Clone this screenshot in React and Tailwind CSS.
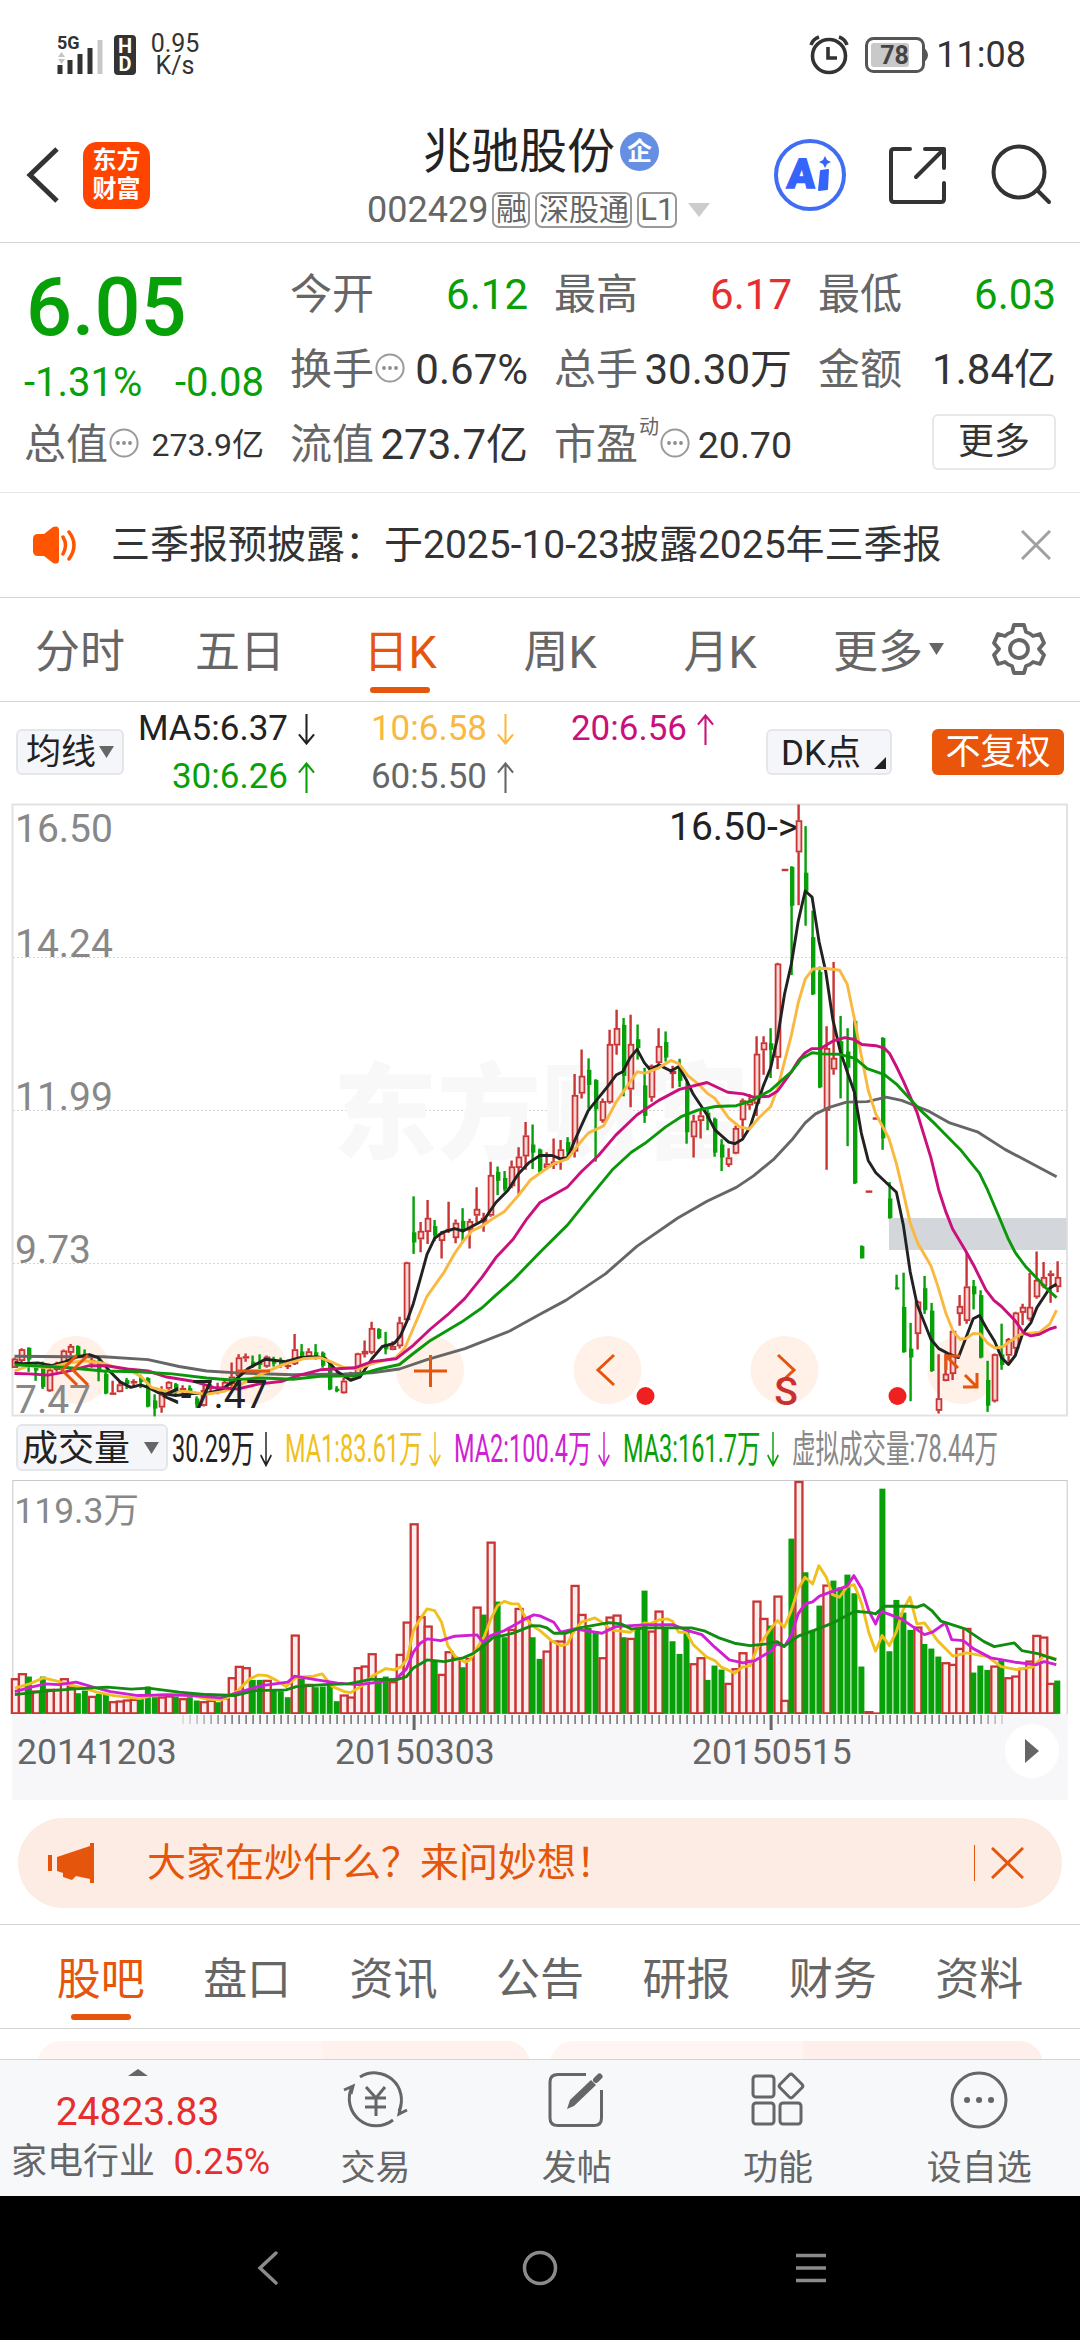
import React, { useState } from "react";

// One entry per trading day: [up/down, high, body top, body bottom, low]
const candles = [
  ["r", 1390, 1393, 1415, 1415], ["r", 1367, 1370, 1398, 1410], ["g", 1365, 1366, 1395, 1425], ["g", 1405, 1415, 1422, 1447],
  ["g", 1400, 1405, 1462, 1467], ["r", 1405, 1420, 1472, 1474], ["r", 1400, 1408, 1420, 1425], ["r", 1370, 1373, 1405, 1412],
  ["r", 1357, 1362, 1378, 1385], ["g", 1360, 1362, 1385, 1390], ["g", 1370, 1380, 1388, 1395], ["r", 1385, 1396, 1404, 1415],
  ["g", 1385, 1402, 1420, 1448], ["g", 1420, 1430, 1478, 1480], ["r", 1447, 1476, 1479, 1480], ["r", 1450, 1456, 1474, 1475],
  ["g", 1440, 1445, 1455, 1467], ["r", 1443, 1448, 1453, 1460], ["g", 1432, 1440, 1450, 1465], ["g", 1438, 1440, 1510, 1512],
  ["g", 1480, 1495, 1515, 1534], ["r", 1460, 1480, 1512, 1525], ["r", 1448, 1450, 1466, 1480], ["g", 1452, 1455, 1475, 1485],
  ["r", 1458, 1465, 1470, 1482], ["g", 1458, 1465, 1480, 1485], ["g", 1485, 1490, 1505, 1513], ["r", 1458, 1470, 1508, 1510],
  ["r", 1455, 1462, 1466, 1480], ["r", 1452, 1463, 1467, 1480], ["r", 1440, 1450, 1465, 1470], ["r", 1402, 1437, 1455, 1465],
  ["r", 1382, 1390, 1435, 1440], ["r", 1380, 1387, 1392, 1400], ["g", 1385, 1400, 1410, 1415], ["g", 1382, 1400, 1408, 1418],
  ["r", 1385, 1388, 1412, 1415], ["g", 1388, 1395, 1405, 1412], ["g", 1390, 1398, 1408, 1415], ["r", 1395, 1408, 1412, 1418],
  ["r", 1332, 1370, 1406, 1408], ["g", 1357, 1375, 1388, 1395], ["r", 1367, 1375, 1388, 1392], ["g", 1357, 1377, 1385, 1395],
  ["g", 1375, 1378, 1410, 1415], ["g", 1400, 1405, 1468, 1470], ["g", 1460, 1466, 1472, 1475], ["r", 1440, 1447, 1477, 1478],
  ["r", 1425, 1432, 1444, 1448], ["r", 1378, 1380, 1438, 1440], ["r", 1348, 1374, 1382, 1390], ["r", 1302, 1318, 1378, 1382],
  ["g", 1318, 1320, 1342, 1345], ["g", 1327, 1358, 1370, 1382], ["r", 1350, 1362, 1371, 1372], ["r", 1290, 1304, 1362, 1368],
  ["r", 1155, 1157, 1298, 1300], ["g", 995, 1083, 1108, 1136], ["r", 1058, 1080, 1100, 1132], ["r", 1004, 1048, 1082, 1112],
  ["g", 1053, 1068, 1090, 1105], ["r", 1080, 1085, 1104, 1147], ["r", 1008, 1075, 1080, 1085], ["r", 1052, 1060, 1097, 1110],
  ["g", 1024, 1055, 1080, 1105], ["r", 1050, 1056, 1078, 1123], ["r", 973, 1026, 1042, 1060], ["r", 1035, 1048, 1058, 1082],
  ["r", 910, 943, 1042, 1045], ["g", 922, 935, 957, 992], ["g", 933, 950, 978, 983], ["r", 907, 922, 970, 975],
  ["r", 875, 898, 925, 990], ["r", 813, 846, 897, 930], ["g", 819, 868, 888, 928], ["g", 878, 880, 935, 940],
  ["r", 887, 915, 925, 930], ["r", 853, 910, 918, 928], ["r", 857, 880, 905, 930], ["g", 850, 862, 885, 905],
  ["r", 695, 747, 885, 900], ["r", 635, 700, 743, 755], ["g", 657, 685, 722, 780], ["g", 708, 710, 782, 910],
  ["r", 755, 762, 810, 815], ["r", 587, 622, 765, 768], ["r", 538, 583, 625, 648], ["g", 558, 575, 700, 750],
  ["r", 550, 622, 733, 777], ["g", 574, 610, 632, 660], ["g", 680, 723, 798, 815], ["r", 672, 675, 753, 763],
  ["r", 583, 627, 668, 672], ["g", 591, 617, 655, 665], ["r", 675, 688, 695, 730], ["g", 658, 680, 712, 727],
  ["g", 715, 730, 838, 866], ["r", 795, 810, 850, 900], ["r", 785, 797, 810, 853], ["g", 782, 790, 805, 833],
  ["g", 802, 805, 888, 898], ["g", 855, 868, 900, 933], ["r", 877, 900, 918, 923], ["r", 822, 828, 890, 892],
  ["r", 755, 760, 808, 850], ["r", 745, 762, 772, 783], ["r", 603, 646, 768, 798], ["r", 603, 618, 637, 697],
  ["g", 583, 620, 636, 705], ["r", 423, 425, 655, 683], ["r", 193, 193, 197, 197], ["g", 186, 188, 283, 453],
  ["r", 35, 74, 152, 282], ["g", 88, 202, 248, 332], ["g", 295, 360, 500, 502], ["g", 432, 445, 728, 730],
  ["r", 578, 632, 785, 930], ["r", 421, 656, 684, 697], ["g", 553, 615, 650, 755], ["g", 583, 640, 680, 872],
  ["g", 563, 565, 963, 965], ["g", 1115, 1117, 1147, 1147], ["r", 981, 981, 985, 985], ["r", 802, 802, 806, 806],
  ["g", 605, 607, 853, 881], ["g", 960, 1000, 1048, 1050], ["g", 1187, 1218, 1223, 1223], ["g", 1182, 1266, 1377, 1378],
  ["g", 1305, 1368, 1390, 1497], ["r", 1250, 1253, 1332, 1370], ["g", 1190, 1220, 1274, 1283], ["g", 1256, 1275, 1423, 1425],
  ["r", 1382, 1490, 1520, 1527], ["r", 1380, 1430, 1447, 1448], ["r", 1322, 1325, 1430, 1445], ["r", 1237, 1264, 1283, 1312],
  ["r", 1130, 1216, 1300, 1307], ["g", 1200, 1215, 1235, 1272], ["g", 1225, 1237, 1390, 1392], ["g", 1398, 1445, 1508, 1523],
  ["r", 1380, 1382, 1497, 1500], ["g", 1307, 1382, 1408, 1420], ["r", 1342, 1345, 1385, 1400], ["r", 1278, 1280, 1368, 1385],
  ["r", 1258, 1266, 1280, 1310], ["r", 1183, 1266, 1296, 1300], ["r", 1130, 1200, 1242, 1246], ["r", 1156, 1193, 1215, 1220],
  ["r", 1177, 1184, 1190, 1256], ["r", 1154, 1193, 1217, 1230],
];

const volumes =
  "r803 r788 g798 r840 g798 r835 r835 r803 r828 g848 g840 r856 g850 g852 r872 r870 r867 r865 g865 g828 g860 r858 r855 g858 r863 g860 g870 r872 r868 g875 r862 r800 r766 r770 g808 g808 r808 g838 g842 g860 r672 g803 r820 g830 g828 g818 g872 r852 r858 r770 r765 r728 g815 g798 r812 r730 r633 r338 r617 r645 g750 r790 r722 r740 g770 r742 r588 g612 r393 g573 g680 r655 r592 r620 g680 g745 r720 r690 r690 r660 r523 r610 g652 g662 r740 r618 r612 g680 r682 g650 g540 r660 r600 g650 g692 g730 g650 r758 r740 g808 g765 g777 r817 r773 r725 r748 r570 r622 g645 r555 r868 g384 r211 g485 g660 g585 r522 g510 g530 g492 g548 g768 r902 r906 g234 g722 g568 g606 g658 r648 g700 g714 g738 r755 r760 r712 r652 g786 g765 g778 r765 g745 r800 r795 r772 r750 r673 r678 r817 g810".split(" ");

// Each average is stored as two halves of x,y pairs, the second half starts at x = 1568
const priceLines = [
  {
    color: "#666666",
    a: "42,1387 200,1388 300,1388 430,1395 520,1412 600,1423 700,1428 850,1432 1000,1430 1080,1427 1160,1418 1240,1395 1350,1368 1480,1325 1568,1284",
    b: "75,1250 190,1185 282,1117 400,1048 485,1007 570,973 620,945 680,903 735,853 770,815 800,793 840,777 890,764 950,763 1005,752 1050,760 1095,775 1130,787 1190,815 1270,837 1350,880 1440,920 1500,947",
  },
  {
    color: "#222222",
    a: "42,1402 65,1405 110,1403 150,1410 190,1400 225,1388 260,1383 285,1390 320,1425 350,1450 380,1463 408,1457 430,1463 460,1476 510,1483 560,1478 600,1477 640,1470 680,1447 720,1417 770,1394 830,1400 870,1390 920,1388 945,1392 980,1425 1018,1446 1045,1438 1080,1393 1110,1363 1145,1355 1162,1338 1182,1300 1200,1258 1220,1198 1240,1137 1262,1098 1285,1083 1320,1074 1345,1080 1385,1062 1405,1053 1440,1010 1475,980 1505,940 1535,913 1568,895",
    b: "35,895 60,903 80,900 100,860 140,785 200,722 222,697 240,690 262,655 282,635 303,668 320,685 345,673 380,688 403,677 425,710 445,745 485,795 508,832 548,862 566,866 588,855 610,825 648,725 670,680 690,605 710,500 730,425 750,320 770,247 790,262 810,370 830,445 850,560 872,640 892,690 913,740 933,840 953,907 975,937 1035,985 1055,1065 1075,1180 1095,1260 1135,1345 1158,1368 1185,1380 1215,1390 1240,1335 1258,1295 1276,1287 1298,1320 1320,1350 1340,1390 1360,1407 1380,1385 1402,1330 1425,1305 1443,1267 1480,1220 1500,1210",
  },
  {
    color: "#f9b940",
    a: "42,1423 85,1410 140,1415 190,1405 240,1398 290,1402 340,1415 385,1425 410,1437 440,1463 480,1472 540,1473 600,1480 650,1473 700,1455 760,1430 820,1408 880,1393 930,1390 960,1400 1000,1415 1040,1418 1080,1405 1150,1390 1175,1367 1200,1318 1240,1240 1290,1180 1320,1135 1345,1105 1370,1080 1400,1068 1430,1050 1465,1032 1505,993 1540,955 1568,938",
    b: "40,915 80,903 110,870 140,840 185,822 220,765 282,690 305,693 345,680 380,662 403,670 430,700 460,720 485,742 508,755 548,803 580,825 608,830 635,803 670,775 690,730 730,600 750,520 770,463 792,438 825,436 870,441 892,475 913,560 933,650 953,735 975,793 1013,853 1035,915 1055,985 1075,1060 1097,1110 1135,1165 1155,1215 1178,1280 1200,1327 1220,1345 1238,1343 1258,1331 1278,1332 1300,1355 1322,1367 1345,1363 1365,1350 1395,1333 1450,1328 1480,1308 1500,1274",
  },
  {
    color: "#c9107c",
    a: "42,1429 85,1430 140,1433 190,1425 260,1410 310,1410 370,1418 430,1423 480,1437 560,1448 620,1463 690,1467 750,1455 820,1448 870,1433 930,1420 1030,1415 1080,1400 1150,1393 1200,1360 1250,1320 1300,1285 1350,1245 1400,1193 1440,1145 1490,1100 1530,1050 1568,1010",
    b: "80,972 120,935 170,895 220,845 282,795 345,760 405,733 485,716 545,740 590,744 620,752 665,750 690,737 730,690 750,663 770,643 790,633 815,633 850,615 885,606 910,610 935,623 975,626 1000,632 1015,645 1035,677 1055,712 1095,790 1135,900 1158,980 1178,1032 1198,1075 1235,1127 1260,1165 1295,1225 1318,1250 1340,1265 1380,1300 1405,1330 1425,1337 1450,1333 1480,1320 1500,1315",
  },
  {
    color: "#0a970a",
    a: "42,1408 100,1410 200,1415 300,1423 400,1425 500,1430 600,1440 670,1445 760,1440 850,1443 930,1436 1030,1435 1100,1418 1160,1407 1200,1380 1250,1348 1340,1303 1400,1268 1440,1237 1490,1200 1568,1132",
    b: "80,1065 140,1002 210,930 265,887 305,865 365,825 410,800 460,783 510,775 570,773 610,762 670,735 700,712 730,690 760,657 790,643 820,646 870,647 915,657 950,682 1000,697 1035,720 1100,780 1150,820 1220,880 1276,938 1300,980 1335,1050 1360,1100 1380,1133 1410,1167 1440,1193 1470,1220 1500,1243",
  },
];

const volumeLines = [
  {
    color: "#f0c01e",
    a: "42,833 85,820 125,802 165,812 200,822 240,832 280,845 330,855 405,864 440,855 500,850 560,855 600,866 640,869 660,862 690,840 725,805 750,793 775,795 800,808 830,828 860,800 910,797 935,790 965,828 1000,843 1018,846 1060,820 1080,797 1120,774 1145,778 1165,768 1182,745 1200,660 1220,625 1240,595 1262,600 1282,635 1300,705 1322,738 1350,755 1365,748 1385,712 1405,680 1425,625 1445,585 1465,572 1485,580 1505,580 1525,620 1545,645 1568,660",
    b: "35,692 62,705 80,700 97,665 120,635 160,622 180,635 205,658 262,665 303,637 320,640 345,628 370,625 385,632 403,665 425,665 445,702 485,740 508,750 527,770 566,788 588,770 610,765 630,715 670,655 690,630 710,650 730,600 750,535 770,500 792,520 810,465 832,500 850,552 870,560 892,528 913,522 935,580 955,665 975,722 994,675 1015,705 1035,665 1055,598 1075,560 1095,640 1117,637 1155,690 1200,737 1240,727 1300,738 1340,768 1385,777 1430,770 1465,735 1500,745",
  },
  {
    color: "#d01fd4",
    a: "42,843 90,830 130,820 170,822 220,815 270,830 320,843 400,855 480,853 560,855 640,862 700,843 760,825 835,815 855,797 920,808 980,818 1040,822 1100,815 1150,805 1180,775 1200,725 1220,698 1240,685 1280,690 1320,677 1385,673 1402,695 1425,675 1465,660 1525,625 1550,613 1568,616",
    b: "40,635 60,665 100,655 180,668 220,648 300,643 385,642 430,660 470,672 508,710 550,748 590,757 625,750 670,722 688,700 710,708 730,675 750,610 770,580 792,574 812,557 892,527 912,495 935,535 955,600 975,640 990,602 1050,625 1117,672 1140,665 1178,637 1196,687 1230,690 1260,715 1310,742 1380,755 1440,763 1465,753 1500,762",
  },
  {
    color: "#118c11",
    a: "42,852 130,842 220,835 310,830 380,836 430,833 520,845 600,852 680,855 740,840 830,838 860,828 940,822 1010,820 1080,806 1150,808 1180,798 1200,772 1240,748 1290,753 1345,742 1375,728 1405,705 1430,682 1490,668 1545,645 1568,646",
    b: "20,652 40,668 75,668 115,652 200,636 235,640 265,655 320,652 440,652 480,662 520,682 565,698 610,705 660,700 688,693 710,707 750,677 800,658 850,638 915,602 960,606 975,610 1000,587 1075,587 1095,590 1115,582 1140,602 1165,632 1235,655 1290,693 1320,708 1378,697 1400,720 1450,730 1500,748",
  },
];

const RED = "#c93434";
const GREEN = "#08a008";

const dayX = (i) => 14.6 + 7 * i;
const priceY = (v) => (v - 35) / 2.45 + 1.5;
const volumeY = (v) => (v - 211) / 3 + 1;

const toPoints = (line, scaleY) => {
  const parse = (text, shift) =>
    text.split(" ").map((pair) => {
      const [x, y] = pair.split(",").map(Number);
      return `${((x + shift) / 2.9037).toFixed(1)},${scaleY(y).toFixed(1)}`;
    });
  return [...parse(line.a, 0), ...parse(line.b, 1568)].join(" ");
};

function Arrow({ up, className }) {
  return (
    <svg className={className} viewBox="0 0 18 32" fill="none" stroke="currentColor" strokeWidth="2.2" preserveAspectRatio="none">
      {up ? <path d="M9 32V1M1 11L9 1.5L17 11" /> : <path d="M9 0V31M1 21L9 30.5L17 21" />}
    </svg>
  );
}

function Triangle({ className }) {
  return (
    <svg className={className} viewBox="0 0 10 10" preserveAspectRatio="none" fill="currentColor">
      <path d="M0 0H10L5 10Z" />
    </svg>
  );
}

function InfoDots() {
  return (
    <svg className="h-[30px] w-[30px] shrink-0" viewBox="0 0 30 30">
      <circle cx="15" cy="15" r="13.6" fill="none" stroke="#9a9a9a" strokeWidth="2" />
      <circle cx="9" cy="15" r="1.9" fill="#8c8c8c" />
      <circle cx="15" cy="15" r="1.9" fill="#8c8c8c" />
      <circle cx="21" cy="15" r="1.9" fill="#8c8c8c" />
    </svg>
  );
}

function StatusBar() {
  return (
    <div className="flex h-[110px] items-center pl-[57px] pr-[54px] text-[#333333]">
      <svg className="h-[42px] w-[47px] overflow-visible" viewBox="0 0 47 42">
        <text x="0" y="15" fontSize="18" fontWeight="700" fill="#333">5G</text>
        <path d="M4.500 18L8 23H1ZM4.500 30L8 25H1Z" fill="#c4c4c4" />
        <path d="M3 31V40M13 26V40M23 20V40M33 14V40" stroke="#333" strokeWidth="5" />
        <path d="M43 6V40" stroke="#c8c8c8" strokeWidth="5" />
      </svg>
      <div className="ml-[10px] flex h-[40px] w-[22px] flex-col items-center justify-center rounded-[4px] bg-[#333333] text-[20px] font-bold leading-[18px] text-white">
        <span>H</span>
        <span>D</span>
      </div>
      <div className="ml-[14px] flex w-[50px] flex-col items-center text-[25px] leading-[22px]">
        <span>0.95</span>
        <span>K/s</span>
      </div>
      <div className="ml-auto flex items-center">
        <svg className="h-[40px] w-[40px]" viewBox="0 0 40 40" fill="none" stroke="#333" strokeWidth="3.600">
          <circle cx="20" cy="21" r="16.500" />
          <path d="M19 12V23H28" />
          <path d="M2 10Q4 4 10 2M38 10Q36 4 30 2" />
        </svg>
        <svg className="ml-[16px] h-[36px] w-[64px]" viewBox="0 0 64 36">
          <rect x="1.500" y="1.500" width="57" height="33" rx="7" fill="#fff" stroke="#555" strokeWidth="3" />
          <rect x="6" y="6" width="38" height="24" rx="3" fill="#c9c9c9" />
          <path d="M60 13Q64 18 60 23Z" fill="#555" stroke="#555" strokeWidth="2" />
          <text x="29.500" y="26.500" textAnchor="middle" fontSize="25" fontWeight="700" fill="#444">78</text>
        </svg>
        <span className="ml-[7px] text-[36px] leading-none">11:08</span>
      </div>
    </div>
  );
}

function Header() {
  return (
    <div className="flex h-[133px] items-start border-b border-[#d4d4d4] pl-[26px]">
      <svg className="mt-[36px] h-[58px] w-[34px]" viewBox="0 0 34 58" fill="none" stroke="#333" strokeWidth="5">
        <path d="M31 3L4 29L31 55" />
      </svg>
      <div className="ml-[23px] mt-[32px] flex h-[67px] w-[67px] flex-col items-center justify-center rounded-[14px] bg-[#ff4400] text-[24px] font-bold leading-[29px] text-white">
        <span>东方</span>
        <span>财富</span>
      </div>
      <div className="ml-[217px] mt-[12px] flex w-[344px] flex-col">
        <div className="ml-[56px] flex h-[60px] items-center">
          <span className="text-[48px] leading-[60px] text-[#222222]">兆驰股份</span>
          <span className="ml-[5px] flex h-[39px] w-[39px] items-center justify-center rounded-full bg-[#658fe3] text-[25px] font-bold leading-none text-white">企</span>
        </div>
        <div className="mt-[10px] flex h-[36px] items-center whitespace-nowrap text-[#666666]">
          <span className="text-[36px] leading-[36px]">002429</span>
          <span className="ml-[4px] flex h-[36px] w-[38px] items-center justify-center rounded-[7px] border-2 border-[#999999] text-[31px] leading-[32px]">融</span>
          <span className="ml-[5px] flex h-[36px] w-[97px] items-center justify-center rounded-[7px] border-2 border-[#999999] text-[30px] leading-[32px]">深股通</span>
          <span className="ml-[5px] flex h-[36px] w-[40px] items-center justify-center rounded-[7px] border-2 border-[#999999] text-[31px] leading-[32px]">L1</span>
          <Triangle className="ml-[11px] h-[14px] w-[22px] text-[#cccccc]" />
        </div>
      </div>
      <svg className="ml-[62px] mt-[28px] h-[74px] w-[74px]" viewBox="0 0 74 74">
        <circle cx="37" cy="37" r="34" fill="none" stroke="#416df5" strokeWidth="4" />
        <text x="14" y="50" fontSize="41" fontWeight="900" fill="#3564fb" stroke="#3564fb" strokeWidth="1.500" transform="skewX(-4) translate(3 0)">A</text>
        <path d="M48 33L55 32L54 51L46 52Z" fill="#3564fb" stroke="#3564fb" strokeWidth="2" strokeLinejoin="round" />
        <path d="M52 18L54 22L58 24L54 26L52 30L50 26L46 24L50 22Z" fill="#3564fb" />
      </svg>
      <svg className="ml-[39px] mt-[33px] h-[62px] w-[62px]" viewBox="0 0 62 62" fill="none" stroke="#333" strokeWidth="4" strokeLinecap="round" strokeLinejoin="round">
        <path d="M24 6H8Q5 6 5 9V56Q5 59 8 59H55Q58 59 58 56V40" />
        <path d="M39 6H58V25M58 6L30 34" />
      </svg>
      <svg className="ml-[41px] mt-[32px] h-[64px] w-[64px]" viewBox="0 0 64 64" fill="none" stroke="#333" strokeWidth="4" strokeLinecap="round">
        <circle cx="30" cy="30" r="25.500" />
        <path d="M48 48L60 60" />
      </svg>
    </div>
  );
}

function Stat({ label, value, info, sup, color = "text-[#333333]", size = "text-[42px]" }) {
  return (
    <div className="flex h-[75px] items-center justify-between leading-none">
      <span className="flex items-center whitespace-nowrap text-[42px] text-[#666666]">
        {label}
        {sup && <span className="-mt-[36px] ml-[1px] text-[20px]">{sup}</span>}
        {info && <span className="-mt-[4px] ml-[1px]"><InfoDots /></span>}
      </span>
      <span className={`${color} ${size} whitespace-nowrap`}>{value}</span>
    </div>
  );
}

function Quote() {
  return (
    <div className="grid h-[250px] grid-cols-[240px_238px_238px_238px] gap-x-[26px] border-b border-[#e6e6e6] pl-[24px] pt-[15px]">
      <div className="flex flex-col leading-none text-[#08a008]">
        <div className="flex h-[100px] items-center pl-[2px] text-[81px] font-medium">6.05</div>
        <div className="flex h-[50px] items-center justify-between text-[40px]">
          <span>-1.31%</span>
          <span>-0.08</span>
        </div>
        <Stat label="总值" value="273.9亿" info size="text-[32px]" />
      </div>
      <div>
        <Stat label="今开" value="6.12" color="text-[#08a008]" />
        <Stat label="换手" value="0.67%" info />
        <Stat label="流值" value="273.7亿" />
      </div>
      <div>
        <Stat label="最高" value="6.17" color="text-[#e62e2e]" />
        <Stat label="总手" value="30.30万" />
        <Stat label="市盈" value="20.70" info sup="动" size="text-[37.500px]" />
      </div>
      <div>
        <Stat label="最低" value="6.03" color="text-[#08a008]" />
        <Stat label="金额" value="1.84亿" />
        <div className="flex h-[75px] items-center justify-end">
          <button className="h-[56px] w-[124px] -translate-y-[3px] rounded-[6px] border-2 border-[#e8e8e8] text-[36px] leading-none text-[#333333]">更多</button>
        </div>
      </div>
    </div>
  );
}

function Notice() {
  return (
    <div className="flex h-[105px] items-center border-b border-[#d4d4d4] pl-[33px] pr-[29px]">
      <svg className="h-[38px] w-[46px]" viewBox="0 0 46 38">
        <path d="M0 13Q0 8 5 8H11L20 1Q26 -1 26 4V34Q26 39 20 37L11 30H5Q0 30 0 25Z" fill="#ff5500" />
        <path d="M30 11Q35 19 30 28M36 6Q46 19 36 33" fill="none" stroke="#ff5500" strokeWidth="3.500" strokeLinecap="round" />
      </svg>
      <span className="ml-[32px] mt-[2px] whitespace-nowrap text-[39px] leading-none text-[#333333]">三季报预披露：于2025-10-23披露2025年三季报</span>
      <svg className="ml-auto h-[30px] w-[30px]" viewBox="0 0 30 30" stroke="#a0a0a0" strokeWidth="3">
        <path d="M1 1L29 29M29 1L1 29" />
      </svg>
    </div>
  );
}

const periods = ["分时", "五日", "日K", "周K", "月K"];

function PeriodTabs() {
  const [active, setActive] = useState("日K");

  return (
    <div className="flex h-[104px] items-stretch border-b border-[#d4d4d4] text-[45px] leading-none text-[#666666]">
      {periods.map((p) => (
        <button key={p} onClick={() => setActive(p)} className="flex w-[160px] flex-col items-center">
          <span className={`flex h-[89px] items-center pt-[20px] ${p === active ? "text-[#e5550c]" : ""}`}>{p}</span>
          {p === active && <span className="h-[6px] w-[60px] rounded-full bg-[#e5550c]" />}
        </button>
      ))}
      <button className="ml-[33px] flex h-[89px] w-[130px] items-center pt-[20px]">
        更多
        <Triangle className="-mt-[6px] ml-[6px] h-[12px] w-[15px] text-[#666666]" />
      </button>
      <svg className="ml-[29px] mt-[24px] h-[54px] w-[54px]" viewBox="0 0 54 54" fill="none" stroke="#666" strokeWidth="3.800" strokeLinejoin="round">
        <path d="M22 3H32L34 10Q38 11 41 14L48 12L52 21L47 27L52 33L48 42L41 40Q38 43 34 44L32 51H22L20 44Q16 43 13 40L6 42L2 33L7 27L2 21L6 12L13 14Q16 11 20 10Z" />
        <circle cx="27" cy="27" r="9" />
      </svg>
    </div>
  );
}

const averages = [
  { text: "MA5:6.37", color: "text-[#222222]" },
  { text: "10:6.58", color: "text-[#f9b940]" },
  { text: "20:6.56", color: "text-[#c9107c]", up: true },
  { text: "30:6.26", color: "text-[#08a008]", up: true },
  { text: "60:5.50", color: "text-[#666666]", up: true },
];

function AverageLegend() {
  return (
    <div className="flex h-[101px] items-center pl-[16px] text-[#222222]">
      <button className="flex h-[46px] w-[108px] items-center justify-center rounded-[6px] border-2 border-[#e4e6ea] bg-[#f5f6fa] text-[35px] leading-none">
        均线
        <Triangle className="ml-[3px] h-[12px] w-[15px] text-[#666666]" />
      </button>
      <div className="mt-[2px] grid grid-cols-[191px_199px_200px] text-[35px] leading-[48px]">
        {averages.map((ma) => (
          <span key={ma.text} className={`flex items-center justify-end whitespace-nowrap ${ma.color}`}>
            {ma.text}
            <Arrow up={ma.up} className="ml-[10px] h-[31px] w-[17px]" />
          </span>
        ))}
      </div>
      <button className="ml-[52px] flex h-[46px] w-[126px] items-center justify-between rounded-[6px] border-2 border-[#e4e6ea] bg-[#f5f6fa] pl-[13px] pr-[4px] text-[35px] leading-none">
        <span className="pt-[2px]">DK点</span>
        <svg className="mt-[22px] h-[12px] w-[12px]" viewBox="0 0 12 12" fill="#222">
          <path d="M12 0V12H0Z" />
        </svg>
      </button>
      <button className="ml-[40px] h-[46px] w-[132px] rounded-[6px] bg-[#e9550a] pt-[1px] text-[35px] leading-none text-white">不复权</button>
    </div>
  );
}

function PriceChart() {
  return (
    <svg className="block h-[613px] w-full overflow-visible" viewBox="0 0 1080 613">
      <rect x="12.500" y="1.500" width="1054.500" height="611" fill="none" stroke="#e2e2e2" strokeWidth="2" />
      {[154.500, 307.500, 460.500].map((y) => (
        <path key={y} d={`M13 ${y}H1066`} stroke="#d6d6d6" strokeWidth="1" strokeDasharray="2 2" />
      ))}
      <text x="333" y="348" fontSize="104" fontWeight="900" fill="#f8f8f8">东方财富</text>
      {[76, 254, 430, 607.500, 784.500, 961.500].map((x) => (
        <circle key={x} cx={x} cy="567" r="34" fill="#fff0e8" />
      ))}
      <g fontSize="39" fill="#888">
        <text x="15" y="39">16.50</text>
        <text x="15" y="154">14.24</text>
        <text x="15" y="307">11.99</text>
        <text x="15" y="460">9.73</text>
        <text x="15" y="610">7.47</text>
      </g>
      <rect x="889" y="415" width="177.500" height="32" fill="#d3d6da" />
      <text x="669" y="37" fontSize="39" fill="#222">16.50-&gt;</text>

      {candles.map(([dir, high, top, bottom, low], i) => {
        const x = dayX(i);
        const y1 = priceY(top);
        const y2 = priceY(bottom);
        if (dir === "g") {
          return (
            <g key={i} fill={GREEN}>
              <rect x={x - 1.200} y={priceY(high)} width="2.400" height={priceY(low) - priceY(high)} />
              <rect x={x - 1.600} y={y1} width="4.400" height={y2 - y1} />
            </g>
          );
        }
        return (
          <g key={i}>
            <path d={`M${x} ${priceY(high)}V${y1}M${x} ${y2}V${priceY(low)}`} stroke={RED} strokeWidth="2.400" />
            <rect x={x - 2} y={y1 + 0.700} width="4.800" height={Math.max(y2 - y1 - 1.400, 0.600)} fill="#f8d6d6" stroke={RED} strokeWidth="1.800" />
          </g>
        );
      })}

      {priceLines.map((line) => (
        <polyline key={line.color} points={toPoints(line, priceY)} fill="none" stroke={line.color} strokeWidth="2.900" strokeLinejoin="round" />
      ))}

      <text x="161" y="605" fontSize="39" fill="#222">&lt;-7.47</text>
      <g stroke="#e5550c" strokeWidth="3" fill="none">
        <path d="M77 552L62 567L77 582M88 552L73 567L88 582" />
        <path d="M237 568H270" />
        <path d="M414 568H447M430.500 552V584" />
        <path d="M614 552L598 567L614 582" />
        <path d="M778 552L794 567L778 582" />
        <path d="M946 567V553H960M946 553L958 565M977 570V584H963M977 584L965 572" />
      </g>
      <text x="786" y="602" fontSize="39" fontWeight="500" fill="#c93131" textAnchor="middle">S</text>
      <circle cx="645.500" cy="593" r="9" fill="#f02020" />
      <circle cx="897.500" cy="593" r="9" fill="#f02020" />
    </svg>
  );
}

const volumeLegend = [
  { text: "30.29万", color: "text-[#222222]", width: "w-[81px]", arrow: true },
  { text: "MA1:83.61万", color: "text-[#f0c01e]", width: "w-[137px]", arrow: true },
  { text: "MA2:100.4万", color: "text-[#d01fd4]", width: "w-[137px]", arrow: true },
  { text: "MA3:161.7万", color: "text-[#08a008]", width: "w-[137px]", arrow: true },
  { text: "虚拟成交量:78.44万", color: "text-[#888888]", width: "w-[208px]" },
];

function VolumeLegend() {
  return (
    <div className="flex h-[64px] items-center pl-[16px]">
      <button className="flex h-[47px] w-[152px] items-center justify-between rounded-[6px] border-2 border-[#e4e6ea] bg-[#f5f6fa] pl-[4px] pr-[7px] text-[36px] leading-none text-[#222222]">
        <span className="pt-[2px]">成交量</span>
        <Triangle className="h-[12px] w-[15px] text-[#666666]" />
      </button>
      <div className="ml-[4px] mt-[3px] flex gap-[13px] text-[38px] leading-[46px]">
        {volumeLegend.map((item) => (
          <span key={item.text} className={`flex items-center ${item.color}`}>
            <span className={`${item.width} whitespace-nowrap`}>
              <span className="inline-block origin-left scale-x-[0.619]">{item.text}</span>
            </span>
            {item.arrow && <Arrow className="ml-[7px] h-[35px] w-[12px]" />}
          </span>
        ))}
      </div>
    </div>
  );
}

function VolumeChart() {
  return (
    <svg className="block h-[235px] w-full" viewBox="0 0 1080 235">
      <rect x="12.500" y="0.500" width="1055" height="234" fill="none" stroke="#c9c9c9" />
      <text x="14" y="43" fontSize="35.500" fill="#888">119.3万</text>
      {volumes.map((v, i) => {
        const x = dayX(i);
        const y = volumeY(Number(v.slice(1)));
        return v[0] === "g" ? (
          <rect key={i} x={x - 3} y={y} width="6" height={234 - y} fill={GREEN} />
        ) : (
          <rect key={i} x={x - 3} y={y + 1} width="7" height={Math.max(232.500 - y, 0.500)} fill="#fdeeee" stroke={RED} strokeWidth="2.300" />
        );
      })}
      {volumeLines.map((line) => (
        <polyline key={line.color} points={toPoints(line, volumeY)} fill="none" stroke={line.color} strokeWidth="2.900" strokeLinejoin="round" />
      ))}
    </svg>
  );
}

function TimeAxis() {
  const ticks = [];
  for (let i = 24; i <= 141; i++) ticks.push(i);

  return (
    <div className="mx-[12px] h-[86px] bg-[#f7f7fa]">
      <svg className="block h-[85px] w-[1056px]" viewBox="12 0 1056 85">
        {ticks.map((i) => {
          const major = i === 57 || i === 108;
          return (
            <path
              key={i}
              d={`M${dayX(i) + 0.500} 1V${major ? 16 : 10}`}
              stroke="#666"
              strokeWidth={major ? 3 : 1.400}
              opacity={Math.min(1, (i - 22) / 9, (143 - i) / 6)}
            />
          );
        })}
        <g fontSize="35.500" fill="#666">
          <text x="17" y="49.500">20141203</text>
          <text x="335" y="49.500">20150303</text>
          <text x="692" y="49.500">20150515</text>
        </g>
        <circle cx="1032" cy="37" r="27" fill="#fff" />
        <path d="M1025 25L1039 37L1025 49Z" fill="#666" />
      </svg>
    </div>
  );
}

function AskBanner() {
  return (
    <div className="mx-[18px] mt-[18px] flex h-[90px] items-center rounded-full bg-[#fcece3] pl-[30px] pr-[38px] text-[#e5550c]">
      <svg className="h-[40px] w-[46px]" viewBox="0 0 46 40" fill="currentColor">
        <path d="M0 12H4V28H0ZM9 14L42 3V0H46V40H42V36L28 33L24 37L15 34V30L9 28Z" />
      </svg>
      <span className="ml-[53px] pt-[1px] text-[39px] leading-none">大家在炒什么？来问妙想！</span>
      <span className="ml-auto h-[36px] w-px bg-[#e5550c]" />
      <svg className="ml-[16px] h-[32px] w-[33px]" viewBox="0 0 33 32" stroke="currentColor" strokeWidth="3">
        <path d="M1 1L32 31M32 1L1 31" />
      </svg>
    </div>
  );
}

const sections = ["股吧", "盘口", "资讯", "公告", "研报", "财务", "资料"];

function SectionTabs() {
  const [active, setActive] = useState("股吧");

  return (
    <div className="mt-[16px] flex h-[105px] border-y border-[#d4d4d4] px-[27.500px] text-[44px] leading-none text-[#666666]">
      {sections.map((s) => (
        <button key={s} onClick={() => setActive(s)} className="flex flex-1 flex-col items-center">
          <span className={`flex h-[89px] items-center pt-[20px] ${s === active ? "text-[#e5550c]" : ""}`}>{s}</span>
          {s === active && <span className="h-[6px] w-[60px] rounded-full bg-[#e5550c]" />}
        </button>
      ))}
    </div>
  );
}

function PostCards() {
  return (
    <div className="flex h-[30px] gap-[20px] overflow-hidden px-[37px] pt-[12px]">
      <div className="flex h-[60px] w-[497px] overflow-hidden rounded-[24px] bg-[#fff5f2]">
        <div className="ml-auto w-[208px] bg-[#fef1ee]" />
      </div>
      <div className="flex h-[60px] w-[497px] overflow-hidden rounded-[24px] bg-[#fff5f2]">
        <div className="ml-auto w-[240px] bg-[#feefec]" />
      </div>
    </div>
  );
}

const actions = [
  {
    label: "交易",
    icon: (
      <>
        <path d="M17 7A27 27 0 0 1 56 41M50 50A27 27 0 0 1 9 17" />
        <path d="M1 20L10 16L8 24M64 40L56 44L58 35" />
        <path d="M23 17L33 28L42 17M22 28H43M22 37H43M33 28V46" />
      </>
    ),
  },
  {
    label: "发帖",
    icon: (
      <>
        <path d="M42 4.500H14Q6 4.500 6 12V48Q6 55.500 14 55.500H50Q57.500 55.500 57.500 48V20" />
        <path d="M23 39L26 30L47 10L52 15L30 36Z" fill="#666" stroke="none" />
        <path d="M52 10L55.500 6.500" strokeWidth="6" strokeLinecap="round" />
      </>
    ),
  },
  {
    label: "功能",
    icon: (
      <>
        <rect x="7" y="6" width="21" height="21" rx="3" />
        <rect x="7" y="33" width="21" height="21" rx="3" />
        <rect x="34" y="33" width="21" height="21" rx="3" />
        <rect x="36" y="7" width="18" height="18" rx="2.500" transform="rotate(45 45 16)" />
      </>
    ),
  },
  {
    label: "设自选",
    icon: (
      <>
        <circle cx="32" cy="30" r="27" />
        <path d="M20 30H20.100M32 30H32.100M44 30H44.100" strokeWidth="6" strokeLinecap="round" />
      </>
    ),
  },
];

function BottomBar() {
  return (
    <div className="flex h-[137px] border-t border-[#d4d4d4] bg-[#f7f8fa] text-[#666666]">
      <div className="flex w-[275px] flex-col items-center leading-none">
        <Triangle className="mt-[9px] h-[7px] w-[20px] rotate-180" />
        <span className="mt-[17px] text-[39px] text-[#e62e2e]">24823.83</span>
        <div className="mt-[12px] flex w-full items-center justify-between pl-[11px] pr-[5px] text-[36px]">
          <span>家电行业</span>
          <span className="text-[#e62e2e]">0.25%</span>
        </div>
      </div>
      {actions.map((a) => (
        <button key={a.label} className="flex w-[201.250px] flex-col items-center text-[35px] leading-none">
          <svg className="mt-[10px] h-[60px] w-[65px]" viewBox="0 0 65 60" fill="none" stroke="#666" strokeWidth="3">
            {a.icon}
          </svg>
          <span className="mt-[21px]">{a.label}</span>
        </button>
      ))}
    </div>
  );
}

function SystemNav() {
  return (
    <div className="flex h-[144px] items-center justify-around bg-black px-[134px]">
      <svg className="h-[36px] w-[36px]" viewBox="0 0 36 36" fill="none" stroke="#8a8a8a" strokeWidth="3.500" strokeLinecap="round">
        <path d="M25 3L9 18L25 33" />
      </svg>
      <svg className="h-[36px] w-[36px]" viewBox="0 0 36 36" fill="none" stroke="#8a8a8a" strokeWidth="3.500">
        <circle cx="18" cy="18" r="15.500" />
      </svg>
      <svg className="h-[36px] w-[36px]" viewBox="0 0 36 36" fill="none" stroke="#8a8a8a" strokeWidth="3.500">
        <path d="M3 5.500H33M3 18H33M3 30.500H33" />
      </svg>
    </div>
  );
}

function App() {
  return (
    <div lang="zh-CN" className="flex h-[2340px] w-[1080px] flex-col overflow-hidden bg-white font-['Roboto','Noto_Sans_CJK_SC',sans-serif]">
      <StatusBar />
      <Header />
      <Quote />
      <Notice />
      <PeriodTabs />
      <AverageLegend />
      <PriceChart />
      <VolumeLegend />
      <VolumeChart />
      <TimeAxis />
      <AskBanner />
      <SectionTabs />
      <PostCards />
      <BottomBar />
      <SystemNav />
    </div>
  );
}

export default App;
